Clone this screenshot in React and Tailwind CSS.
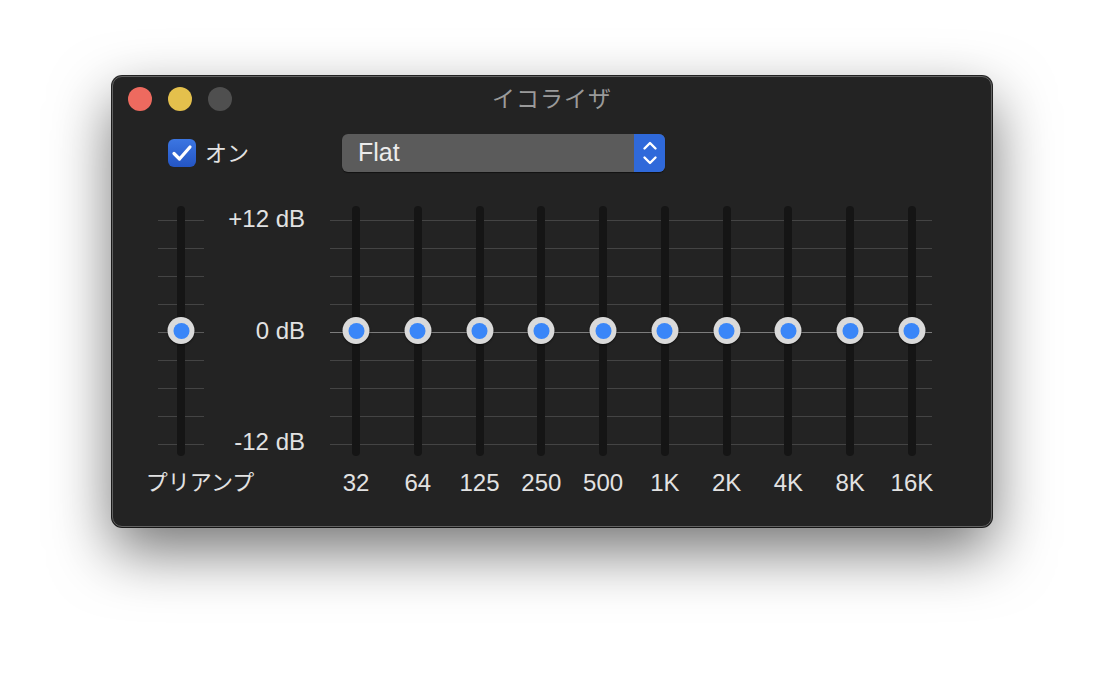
import React from "react";

const FONT = { fontFamily: '"Liberation Sans", "Noto Sans CJK JP", sans-serif' };

const bands = ["32", "64", "125", "250", "500", "1K", "2K", "4K", "8K", "16K"];
const lineRows = [0, 1, 2, 3, 4, 5, 6, 7, 8];

function Lines({ dim }) {
  // horizontal scale lines, +12 dB to -12 dB in 3 dB steps
  return (
    <div className="absolute inset-x-0 top-0 h-[250px] pointer-events-none">
      {lineRows.map((i) => (
        <div
          key={i}
          className={`absolute inset-x-0 h-px ${i === 4 ? (dim ? "bg-[#5a5a5a]" : "bg-[#7c7c7c]") : "bg-[#444444]"}`}
          style={{ top: 14 + i * 28 }}
        />
      ))}
    </div>
  );
}

function Slider() {
  return (
    <div className="relative w-[8px] h-[250px] rounded-full bg-[#151515]">
      <div className="absolute left-1/2 top-[111px] -translate-x-1/2 w-[27px] h-[27px] rounded-full bg-[#dadada] shadow-[0_1px_2px_rgba(0,0,0,0.6)] flex items-center justify-center">
        <div className="w-[16px] h-[16px] rounded-full bg-[#3a86f8]" />
      </div>
    </div>
  );
}

export default function App() {
  return (
    <div className="w-[1104px] h-[674px] bg-white pt-[76px] pl-[112px]" style={FONT}>
      <div className="w-[880px] h-[451px] rounded-[10px] bg-[#232323] border border-[#626262] shadow-[0_24px_60px_rgba(0,0,0,0.55),0_0_0_1px_rgba(0,0,0,0.85)]">
        {/* title bar */}
        <div className="grid grid-cols-[1fr_auto_1fr] items-center h-[44px] px-[15px]">
          <div className="flex gap-4">
            <div className="w-[24px] h-[24px] rounded-full bg-[#ee6a5f]" />
            <div className="w-[24px] h-[24px] rounded-full bg-[#e4c04c]" />
            <div className="w-[24px] h-[24px] rounded-full bg-[#4f4f4f]" />
          </div>
          <div className="text-[23px] text-[#9a9a9a] tracking-[1px]">イコライザ</div>
          <div />
        </div>

        {/* controls */}
        <div className="flex items-center mt-[13px] pl-[55px] h-[38px]">
          <div className="flex items-center gap-[9px] w-[174px]">
            <div className="w-[28px] h-[28px] rounded-[6px] bg-gradient-to-b from-[#3c76e2] to-[#2455c4] flex items-center justify-center">
              <svg width="22" height="18" viewBox="0 0 22 18">
                <path d="M3 9.5 L8.5 15 L19 3" fill="none" stroke="white" strokeWidth="3.2" strokeLinecap="round" strokeLinejoin="round" />
              </svg>
            </div>
            <span className="text-[22px] text-[#e2e2e2]">オン</span>
          </div>
          <div className="flex w-[323px] h-[38px] rounded-[6px] bg-[#5b5b5b] overflow-hidden shadow-[0_1px_1px_rgba(0,0,0,0.5)]">
            <div className="flex-1 flex items-center pl-[16px] text-[25px] text-[#ececec]">Flat</div>
            <div className="w-[31px] bg-[#2f69da] flex items-center justify-center">
              <svg width="16" height="28" viewBox="0 0 16 28">
                <path d="M2.5 9.5 L8 4 L13.5 9.5" fill="none" stroke="white" strokeWidth="2.4" strokeLinecap="round" strokeLinejoin="round" />
                <path d="M2.5 18.5 L8 24 L13.5 18.5" fill="none" stroke="white" strokeWidth="2.4" strokeLinecap="round" strokeLinejoin="round" />
              </svg>
            </div>
          </div>
        </div>

        {/* sliders */}
        <div className="flex mt-[34px] pl-[45px]">
          {/* preamp */}
          <div className="relative w-[46px] flex flex-col items-center">
            <Lines dim />
            <Slider />
            <div className="mt-[13px] text-[22px] leading-[28px] text-[#e2e2e2] whitespace-nowrap translate-x-[19px]">プリアンプ</div>
          </div>

          {/* dB scale */}
          <div className="w-[101px] h-[252px] flex flex-col justify-between items-end text-[24px] text-[#e2e2e2]">
            <div className="h-[28px] leading-[26px]">+12 dB</div>
            <div className="h-[28px] leading-[26px]">0 dB</div>
            <div className="h-[28px] leading-[24px]">-12 dB</div>
          </div>

          {/* bands */}
          <div className="relative w-[602px] ml-[25px] flex justify-between pl-[12px] pr-[6px]">
            <Lines />
            {bands.map((b) => (
              <div key={b} className="w-[28px] flex flex-col items-center">
                <Slider />
                <div className="mt-[13px] text-[24px] leading-[28px] text-[#e2e2e2] whitespace-nowrap">{b}</div>
              </div>
            ))}
          </div>
        </div>
      </div>
    </div>
  );
}
